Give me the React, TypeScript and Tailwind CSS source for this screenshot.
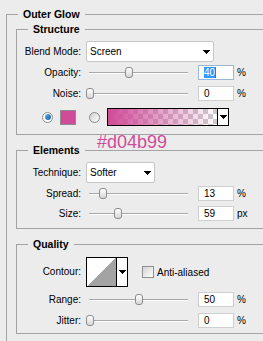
import React from "react";

type Kids = { children?: React.ReactNode; className?: string };

const Arrow = () => (
  <svg width="7" height="4" viewBox="0 0 7 4" shapeRendering="crispEdges">
    <polygon points="0,0 7,0 3.5,4" fill="#000" />
  </svg>
);

const Group = ({ title, children, className = "" }: Kids & { title: string }) => (
  <div className={`border-l border-t border-[#a3a3a3] ${className}`}>
    <div className="-mt-[7px] ml-[11px] w-fit px-[5px] bg-[#ececec] h-[13px] leading-[13px] text-[10.5px] font-bold text-black">
      {title}
    </div>
    {children}
  </div>
);

const Label = ({ children }: Kids) => (
  <div className="w-[64px] shrink-0 text-right text-[10px] leading-[12px] text-black">{children}</div>
);

const Slider = ({ at }: { at: number }) => (
  <div className="relative ml-[4px] w-[108px] h-[15px] shrink-0">
    <div className="absolute left-[4px] top-[7px] w-[99px] h-[2px] border-t border-[#a9a9a9] border-b border-b-white" />
    <div
      className="absolute top-[2px] w-[8px] h-[11px] rounded-[3px] border border-[#8c8c8c] bg-gradient-to-b from-white to-[#d6d6d6]"
      style={{ left: at - 85 - 4 }}
    />
  </div>
);

const Field = ({ value, unit, focused }: { value: string; unit: string; focused?: boolean }) => (
  <>
    <div
      className={`ml-[5px] w-[36px] h-[15px] shrink-0 bg-white border pl-[5px] flex items-center text-[10px] text-black ${
        focused ? "border-[#9db6d2]" : "border-[#cfcfcf]"
      }`}
    >
      {focused ? (
        <>
          <span className="bg-[#3399ff] text-white leading-[11px]">{value}</span>
          <span className="w-[1px] h-[11px] bg-[#b0581c]" />
        </>
      ) : (
        value
      )}
    </div>
    <span className="ml-[3px] text-[10px] text-black">{unit}</span>
  </>
);

const SliderRow = ({ label, at, value, unit, focused, className = "" }: {
  label: string; at: number; value: string; unit: string; focused?: boolean; className?: string;
}) => (
  <div className={`flex items-center h-[15px] ${className}`}>
    <Label>{label}</Label>
    <Slider at={at} />
    <Field value={value} unit={unit} focused={focused} />
  </div>
);

const Select = ({ value, width }: { value: string; width: string }) => (
  <div className={`ml-[5px] ${width} h-[21px] bg-white border border-[#c6c6c6] rounded-[2px] flex items-center justify-between pl-[3px] pr-[3px] text-[10px] text-black`}>
    <span>{value}</span>
    <Arrow />
  </div>
);

const Radio = ({ on }: { on?: boolean }) => (
  <div
    className={`w-[11px] h-[11px] rounded-full border border-[#8a8a8a] flex items-center justify-center shrink-0 ${
      on ? "bg-white" : "bg-gradient-to-br from-[#cfcfcf] to-white"
    }`}
  >
    {on && <div className="w-[6px] h-[6px] rounded-full bg-gradient-to-br from-[#5fb0e6] to-[#0f5d99]" />}
  </div>
);

export default function App() {
  return (
    <div className="w-[263px] h-[341px] overflow-hidden bg-[#ececec] pl-[6px] pt-[14px] font-['Liberation_Sans',Arial,sans-serif]">
      <Group title="Outer Glow" className="h-[400px]">
        <Group title="Structure" className="ml-[9px] mt-[8px] border-b pb-[8px]">
          <div className="flex items-center mt-[5px]">
            <Label>Blend Mode:</Label>
            <Select value="Screen" width="w-[128px]" />
          </div>
          <SliderRow className="mt-[3px]" label="Opacity:" at={129} value="40" unit="%" focused />
          <SliderRow className="mt-[6px]" label="Noise:" at={90} value="0" unit="%" />
          <div className="flex items-center h-[18px] mt-[7px]">
            <div className="ml-[25px]">
              <Radio on />
            </div>
            <div className="ml-[7px] w-[16px] h-[15px] border border-[#8d8d8d] bg-[#d04b99]" />
            <div className="ml-[13px]">
              <Radio />
            </div>
            <div className="ml-[7px] w-[122px] h-[18px] border border-black flex">
              <div className="flex-1 bg-[image:conic-gradient(#cccccc_25%,#ffffff_0_50%,#cccccc_0_75%,#ffffff_0)] bg-[length:10px_10px]">
                <div className="w-full h-full bg-gradient-to-r from-[#d04b99] to-[#d04b99]/0" />
              </div>
              <div className="w-[11px] border-l border-black bg-white flex items-center justify-center">
                <Arrow />
              </div>
            </div>
          </div>
        </Group>

        <div className="h-[15px] pl-[90px] text-[18px] leading-[15px] text-[#d04b99]">#d04b99</div>

        <Group title="Elements" className="ml-[9px] border-b pb-[7px]">
          <div className="flex items-center mt-[5px]">
            <Label>Technique:</Label>
            <Select value="Softer" width="w-[69px]" />
          </div>
          <SliderRow className="mt-[3px]" label="Spread:" at={103} value="13" unit="%" />
          <SliderRow className="mt-[5px]" label="Size:" at={118} value="59" unit="px" />
        </Group>

        <Group title="Quality" className="ml-[9px] mt-[15px] border-b pb-[5px]">
          <div className="flex items-center mt-[6px]">
            <Label>Contour:</Label>
            <div className="ml-[5px] w-[42px] h-[30px] border border-black flex bg-white shrink-0">
              <svg width="29" height="28" viewBox="0 0 29 28" shapeRendering="crispEdges">
                <polygon points="0,28 29,0 29,28" fill="#a3a3a3" />
              </svg>
              <div className="flex-1 border-l border-black flex items-center justify-center">
                <Arrow />
              </div>
            </div>
            <div className="ml-[14px] w-[12px] h-[12px] border border-[#8f8f8f] bg-gradient-to-br from-[#d4d4d4] to-white shrink-0" />
            <span className="ml-[3px] text-[10px] text-black">Anti-aliased</span>
          </div>
          <SliderRow className="mt-[5px]" label="Range:" at={139} value="50" unit="%" />
          <SliderRow className="mt-[6px]" label="Jitter:" at={90} value="0" unit="%" />
        </Group>
      </Group>
    </div>
  );
}
